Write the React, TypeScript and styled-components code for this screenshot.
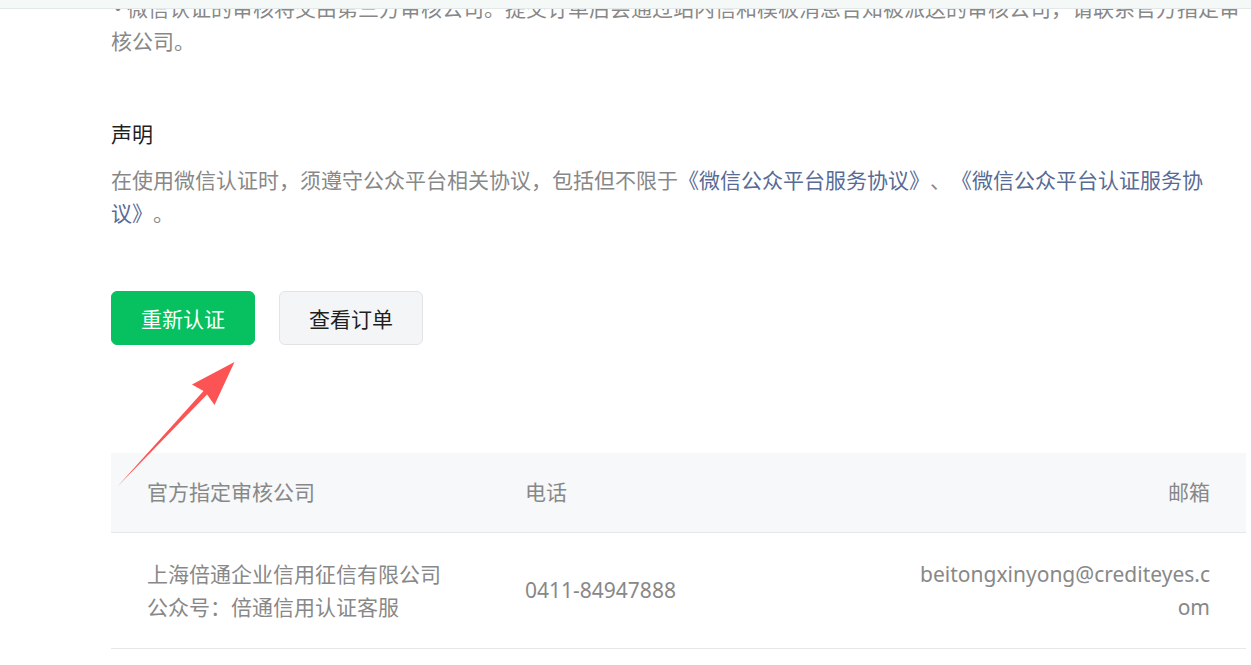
import React from "react";
import styled, { createGlobalStyle } from "styled-components";

const GlobalStyle = createGlobalStyle`
  html, body {
    margin: 0;
    padding: 0;
    background: #ffffff;
  }
  body {
    font-family: "Noto Sans", "Noto Sans CJK SC", sans-serif;
    overflow: hidden;
    text-spacing-trim: space-all;
  }
`;

const TopBar = styled.div`
  position: fixed;
  top: 0;
  left: 0;
  right: 0;
  height: 8px;
  background: #f4f8f7;
  border-bottom: 1px solid #e3e9e8;
  z-index: 2;
`;

const Main = styled.main`
  width: 1135px;
  margin: -8px 0 0 111px;
  display: flex;
  flex-direction: column;
`;

const Text = styled.p`
  margin: 0;
  font-size: 21px;
  line-height: 33px;
  color: #888888;
  text-spacing-trim: space-all;
  line-break: strict;
`;

const Bullet = styled.span`
  display: inline-block;
  width: 16px;
  padding-left: 3px;
  box-sizing: border-box;
`;

const Section = styled.section`
  margin-top: 60px;
  display: flex;
  flex-direction: column;
  gap: 13px;
`;

const Title = styled.h3`
  margin: 0;
  font-size: 21px;
  line-height: 33px;
  font-weight: normal;
  color: #1f1f1f;
`;

const Link = styled.a`
  color: #576b95;
  text-decoration: none;
`;

const ButtonRow = styled.div`
  margin-top: 61px;
  display: flex;
  gap: 24px;
`;

const Button = styled.button<{ $primary?: boolean }>`
  width: 144px;
  height: 54px;
  box-sizing: border-box;
  border-radius: 6px;
  font-family: inherit;
  font-size: 21px;
  display: flex;
  align-items: center;
  justify-content: center;
  padding: 0;
  cursor: pointer;
  background: ${(p) => (p.$primary ? "#07c160" : "#f4f5f7")};
  color: ${(p) => (p.$primary ? "#ffffff" : "#1f1f1f")};
  border: 1px solid ${(p) => (p.$primary ? "#07c160" : "#e2e3e5")};
`;

const Table = styled.table`
  margin-top: 108px;
  width: 100%;
  table-layout: fixed;
  border-collapse: collapse;
  font-size: 21px;
  line-height: 33px;
  color: #888888;
`;

const Th = styled.th<{ $align?: string }>`
  height: 79px;
  padding: 0 36px;
  background: #f6f8f9;
  border-bottom: 1px solid #e6e8ea;
  font-weight: normal;
  text-align: ${(p) => p.$align || "left"};
`;

const Td = styled.td<{ $align?: string }>`
  height: 115px;
  padding: 0 36px;
  border-bottom: 1px solid #e6e8ea;
  text-align: ${(p) => p.$align || "left"};
  vertical-align: middle;
  word-break: break-all;
`;

const ArrowLayer = styled.svg`
  position: fixed;
  top: 0;
  left: 0;
  width: 1251px;
  height: 665px;
  pointer-events: none;
  z-index: 3;
`;

export default function App() {
  return (
    <>
      <GlobalStyle />
      <TopBar />
      <Main>
        <Text>
          <Bullet>•</Bullet>
          微信认证的审核将交由第三方审核公司。提交订单后会通过站内信和模板消息告知被派送的审核公司，请联系官方指定审核公司。
        </Text>
        <Section>
          <Title>声明</Title>
          <Text>
            在使用微信认证时，须遵守公众平台相关协议，包括但不限于
            <Link>《微信公众平台服务协议》</Link>、<Link>《微信公众平台认证服务协议》</Link>。
          </Text>
        </Section>
        <ButtonRow>
          <Button $primary>重新认证</Button>
          <Button>查看订单</Button>
        </ButtonRow>
        <Table>
          <colgroup>
            <col style={{ width: 378 }} />
            <col style={{ width: 390 }} />
            <col />
          </colgroup>
          <thead>
            <tr>
              <Th>官方指定审核公司</Th>
              <Th>电话</Th>
              <Th $align="right">邮箱</Th>
            </tr>
          </thead>
          <tbody>
            <tr>
              <Td>
                上海倍通企业信用征信有限公司
                <br />
                公众号：倍通信用认证客服
              </Td>
              <Td>0411-84947888</Td>
              <Td $align="right">beitongxinyong@crediteyes.com</Td>
            </tr>
          </tbody>
        </Table>
      </Main>
      <ArrowLayer viewBox="0 0 1251 665">
        <polygon
          points="117,487 203.5,391 192,384.5 234.5,362 214.5,405 207.1,394.4"
          fill="#fc5454"
        />
      </ArrowLayer>
    </>
  );
}
